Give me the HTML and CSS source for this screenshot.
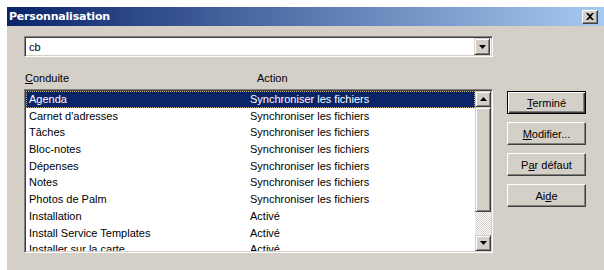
FILE: index.html
```html
<!DOCTYPE html>
<html lang="fr">
  <head>
    <meta charset="UTF-8" />
    <title>Personnalisation</title>
    <link rel="stylesheet" href="styles.css">
  </head>
  <body>
    <div class="dialog">
      <div class="titlebar">
        <span class="title">Personnalisation</span>
        <button class="close">
          <svg width="8" height="7" viewBox="0 0 8 7"><path d="M0 0h2l2 2 2-2h2L5 3.5 8 7H6L4 5 2 7H0l3-3.5z" fill="#000"/></svg>
        </button>
      </div>

      <div class="content">
        <div class="main">
          <div class="combo">
            <span class="combo-value">cb</span>
            <span class="arrow-btn">
              <svg width="7" height="4" viewBox="0 0 7 4"><path d="M0 0h7L3.5 4z" fill="#000"/></svg>
            </span>
          </div>

          <div class="headers">
            <span class="col-name"><u>C</u>onduite</span>
            <span class="col-action">Action</span>
          </div>

          <div class="listbox">
            <ul class="rows">
              <li class="selected"><span class="col-name">Agenda</span><span class="col-action">Synchroniser les fichiers</span></li>
              <li><span class="col-name">Carnet d'adresses</span><span class="col-action">Synchroniser les fichiers</span></li>
              <li><span class="col-name">Tâches</span><span class="col-action">Synchroniser les fichiers</span></li>
              <li><span class="col-name">Bloc-notes</span><span class="col-action">Synchroniser les fichiers</span></li>
              <li><span class="col-name">Dépenses</span><span class="col-action">Synchroniser les fichiers</span></li>
              <li><span class="col-name">Notes</span><span class="col-action">Synchroniser les fichiers</span></li>
              <li><span class="col-name">Photos de Palm</span><span class="col-action">Synchroniser les fichiers</span></li>
              <li><span class="col-name">Installation</span><span class="col-action">Activé</span></li>
              <li><span class="col-name">Install Service Templates</span><span class="col-action">Activé</span></li>
              <li><span class="col-name">Installer sur la carte</span><span class="col-action">Activé</span></li>
            </ul>
            <div class="scrollbar">
              <span class="sb-btn">
                <svg width="7" height="4" viewBox="0 0 7 4"><path d="M0 4h7L3.5 0z" fill="#000"/></svg>
              </span>
              <span class="sb-thumb"></span>
              <span class="sb-track"></span>
              <span class="sb-btn">
                <svg width="7" height="4" viewBox="0 0 7 4"><path d="M0 0h7L3.5 4z" fill="#000"/></svg>
              </span>
            </div>
          </div>
        </div>

        <div class="buttons">
          <button class="btn default"><u>T</u>erminé</button>
          <button class="btn"><u>M</u>odifier...</button>
          <button class="btn">P<u>a</u>r défaut</button>
          <button class="btn">Ai<u>d</u>e</button>
        </div>
      </div>
    </div>
  </body>
</html>
```

FILE: styles.css
```css
* {
  box-sizing: border-box;
  margin: 0px;
  padding: 0px;
}
body {
  background: #ffffff;
  padding: 7px 0 0 7px;
  height: 270px;
  overflow: hidden;
  font-family: "Liberation Sans", Arial, sans-serif;
  font-size: 11px;
  color: #000;
}
.dialog {
  background: #d4d0c8;
  height: 263px;
  display: flex;
  flex-direction: column;
}
.titlebar {
  height: 19px;
  background: linear-gradient(to right, #0a246a, #a6caf0);
  display: flex;
  align-items: center;
  justify-content: space-between;
  padding: 0 6px 0 2px;
}
.title {
  color: #fff;
  font-family: "DejaVu Sans", sans-serif;
  font-weight: bold;
  font-size: 11px;
  letter-spacing: -0.2px;
}
.close {
  width: 16px;
  height: 14px;
  background: #d4d0c8;
  border: 1px solid;
  border-color: #fff #404040 #404040 #fff;
  box-shadow: inset -1px -1px 0 #808080;
  display: flex;
  align-items: center;
  justify-content: center;
}
.content {
  display: flex;
  gap: 14px;
  padding: 10px 0 0 17px;
}
.main {
  width: 469px;
  display: flex;
  flex-direction: column;
}
.combo {
  height: 21px;
  background: #fff;
  border: 1px solid;
  border-color: #808080 #fff #fff #808080;
  box-shadow: inset 1px 1px 0 #404040, inset -1px -1px 0 #d4d0c8;
  display: flex;
  align-items: center;
  padding: 2px;
}
.combo-value {
  flex: 1;
  padding-left: 2px;
}
.arrow-btn,
.sb-btn {
  width: 16px;
  height: 17px;
  background: #d4d0c8;
  border: 1px solid;
  border-color: #d4d0c8 #404040 #404040 #d4d0c8;
  box-shadow: inset 1px 1px 0 #fff, inset -1px -1px 0 #808080;
  display: flex;
  align-items: center;
  justify-content: center;
}
.headers {
  display: flex;
  height: 15px;
  margin: 13px 0 4px;
  align-items: center;
}
.headers .col-name {
  width: 233px;
  padding-left: 1px;
}
.listbox {
  height: 164px;
  background: #fff;
  border: 1px solid;
  border-color: #808080 #fff #fff #808080;
  box-shadow: inset 1px 1px 0 #404040, inset -1px -1px 0 #d4d0c8;
  display: flex;
  padding: 1px;
  overflow: hidden;
}
.rows {
  flex: 1;
  list-style: none;
  overflow: hidden;
}
.rows li {
  height: 16.7px;
  line-height: 16px;
  display: flex;
  padding-left: 3px;
  white-space: nowrap;
}
.rows .col-name {
  width: 221px;
}
.rows li.selected {
  background: #0a246a;
  color: #fff;
  outline: 1px dotted #c8b878;
  outline-offset: -1px;
}
.scrollbar {
  width: 16px;
  display: flex;
  flex-direction: column;
}
.sb-btn {
  height: 16px;
}
.sb-thumb {
  height: 105px;
  background: #d4d0c8;
  border: 1px solid;
  border-color: #d4d0c8 #404040 #404040 #d4d0c8;
  box-shadow: inset 1px 1px 0 #fff, inset -1px -1px 0 #808080;
}
.sb-track {
  flex: 1;
  background-color: #fff;
  background-image: repeating-conic-gradient(#d4d0c8 0 25%, #fff 0 50%);
  background-size: 2px 2px;
}
.buttons {
  display: flex;
  flex-direction: column;
  gap: 8px;
  padding-top: 55px;
}
.btn {
  width: 79px;
  height: 23px;
  background: #d4d0c8;
  font-family: "Liberation Sans", Arial, sans-serif;
  font-size: 11px;
  color: #000;
  border: 1px solid;
  border-color: #fff #404040 #404040 #fff;
  box-shadow: inset -1px -1px 0 #808080;
}
.btn.default {
  border: 1px solid #000;
  box-shadow: inset 1px 1px 0 #fff, inset -1px -1px 0 #404040, inset -2px -2px 0 #808080;
}
```
